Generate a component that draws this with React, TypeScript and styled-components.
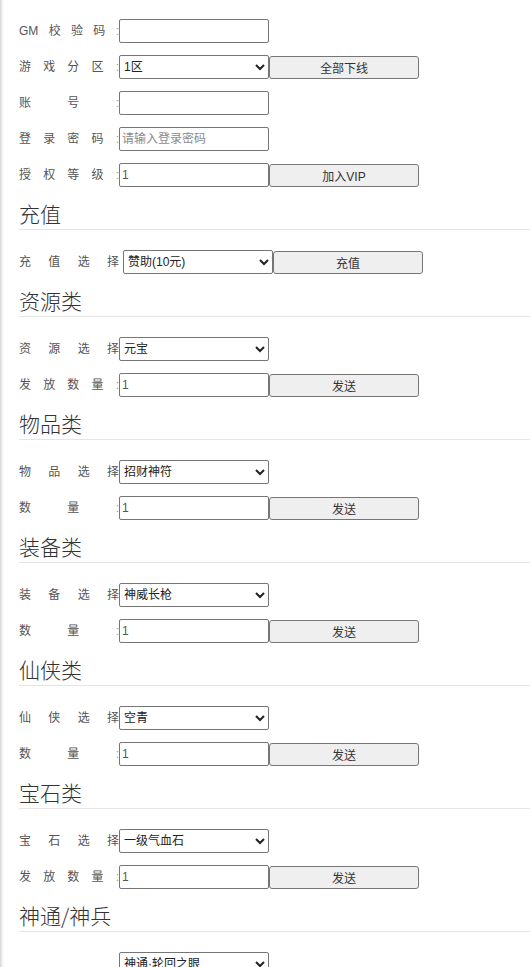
import styled, { createGlobalStyle } from "styled-components";

const GlobalStyle = createGlobalStyle`
  html {
    background: linear-gradient(to right, #d6d6d6 0, #efefef 2px, #fff 4px);
  }
  body {
    margin: 8px 0 8px 8px;
    font-family: "Liberation Sans", "Noto Sans CJK SC", sans-serif;
    color: #333;
  }
`;

type Field =
  | { kind: "input"; label: string[]; value?: string; placeholder?: string; button?: string }
  | { kind: "select"; label: string[]; options: string[]; button?: string; spaced?: boolean };

type Section = {
  title?: string;
  fields: Field[];
};

const sections: Section[] = [
  {
    fields: [
      { kind: "input", label: ["GM", "校", "验", "码", ":"] },
      { kind: "select", label: ["游", "戏", "分", "区", ":"], options: ["1区"], button: "全部下线" },
      { kind: "input", label: ["账", "号", ":"] },
      { kind: "input", label: ["登", "录", "密", "码", ":"], placeholder: "请输入登录密码" },
      { kind: "input", label: ["授", "权", "等", "级", ":"], value: "1", button: "加入VIP" },
    ],
  },
  {
    title: "充值",
    fields: [
      { kind: "select", label: ["充", "值", "选", "择"], options: ["赞助(10元)"], button: "充值", spaced: true },
    ],
  },
  {
    title: "资源类",
    fields: [
      { kind: "select", label: ["资", "源", "选", "择"], options: ["元宝"] },
      { kind: "input", label: ["发", "放", "数", "量", ":"], value: "1", button: "发送" },
    ],
  },
  {
    title: "物品类",
    fields: [
      { kind: "select", label: ["物", "品", "选", "择"], options: ["招财神符"] },
      { kind: "input", label: ["数", "量", ":"], value: "1", button: "发送" },
    ],
  },
  {
    title: "装备类",
    fields: [
      { kind: "select", label: ["装", "备", "选", "择"], options: ["神威长枪"] },
      { kind: "input", label: ["数", "量", ":"], value: "1", button: "发送" },
    ],
  },
  {
    title: "仙侠类",
    fields: [
      { kind: "select", label: ["仙", "侠", "选", "择"], options: ["空青"] },
      { kind: "input", label: ["数", "量", ":"], value: "1", button: "发送" },
    ],
  },
  {
    title: "宝石类",
    fields: [
      { kind: "select", label: ["宝", "石", "选", "择"], options: ["一级气血石"] },
      { kind: "input", label: ["发", "放", "数", "量", ":"], value: "1", button: "发送" },
    ],
  },
  {
    title: "神通/神兵",
    fields: [{ kind: "select", label: [], options: ["神通·轮回之眼"] }],
  },
];

function FieldRow({ field }: { field: Field }) {
  return (
    <Row>
      <Label>
        {field.label.map((ch, i) => (
          <LabelChar key={i} $colon={ch === ":"}>
            {ch}
          </LabelChar>
        ))}
      </Label>
      {field.kind === "input" ? (
        <TextInput defaultValue={field.value} placeholder={field.placeholder} />
      ) : (
        <Select $spaced={field.spaced}>
          {field.options.map((o) => (
            <option key={o}>{o}</option>
          ))}
        </Select>
      )}
      {field.button && <ActionButton>{field.button}</ActionButton>}
    </Row>
  );
}

export default function App() {
  return (
    <>
      <GlobalStyle />
      <Page>
        {sections.map((s, i) => (
          <div key={i}>
            {s.title && <SectionTitle>{s.title}</SectionTitle>}
            {s.fields.map((f, j) => (
              <FieldRow key={j} field={f} />
            ))}
          </div>
        ))}
      </Page>
    </>
  );
}

const Page = styled.div`
  padding: 11px 0 0 11px;
`;

const SectionTitle = styled.h3`
  margin: 0 0 20px;
  padding-bottom: 2px;
  font-family: "Noto Sans CJK SC", sans-serif;
  font-size: 21px;
  font-weight: 300;
  line-height: 28px;
  color: #333;
  border-bottom: 1px solid #e5e5e5;
`;

const Row = styled.div`
  display: flex;
  align-items: center;
  height: 24px;
  margin-bottom: 12px;
`;

const Label = styled.label`
  width: 100px;
  flex-shrink: 0;
  display: flex;
  align-items: baseline;
  justify-content: space-between;
  font-size: 12px;
  line-height: 16px;
  color: #555;
`;

const LabelChar = styled.span<{ $colon?: boolean }>`
  color: ${(p) => (p.$colon ? "#999" : "#555")};
`;

const TextInput = styled.input`
  box-sizing: border-box;
  width: 150px;
  height: 24px;
  margin: 0;
  padding: 0 2px;
  border: 1px solid #767676;
  border-radius: 2px;
  font-family: "Liberation Sans", "Noto Sans CJK SC", sans-serif;
  font-size: 12px;
  color: #555;

  &::placeholder {
    color: #8a8a8a;
  }
`;

const Select = styled.select<{ $spaced?: boolean }>`
  box-sizing: border-box;
  width: 150px;
  height: 24px;
  margin: 0 0 0 ${(p) => (p.$spaced ? "4px" : "0")};
  border: 1px solid #767676;
  border-radius: 2px;
  background: #fff;
  font-family: "Liberation Sans", "Noto Sans CJK SC", sans-serif;
  font-size: 12px;
  color: #222;
`;

const ActionButton = styled.button`
  box-sizing: border-box;
  width: 150px;
  height: 23px;
  margin: 0;
  border: 1px solid #767676;
  border-radius: 3px;
  background: #efefef;
  font-family: "Liberation Sans", "Noto Sans CJK SC", sans-serif;
  font-size: 12px;
  color: #333;
`;
